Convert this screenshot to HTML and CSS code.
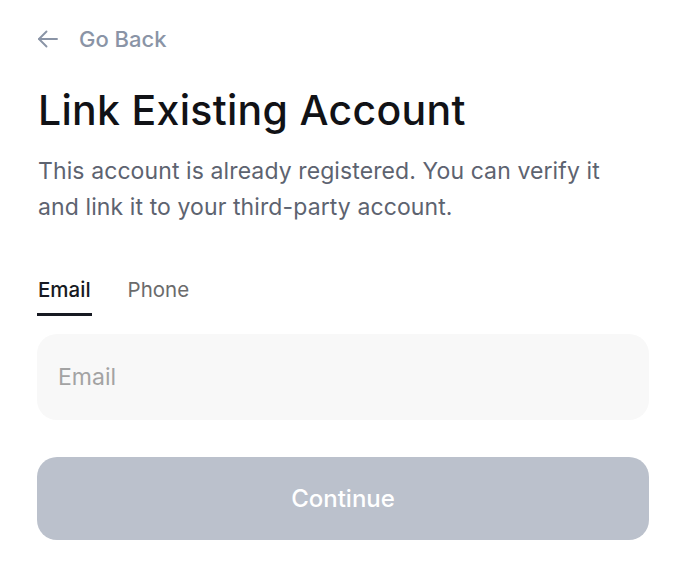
FILE: index.html
```html
<!DOCTYPE html>
<html lang="en">
<head>
<meta charset="utf-8">
<title>Link Existing Account</title>
<link rel="stylesheet" href="styles.css">
</head>
<body>
<main class="page">
  <a class="back" href="#">
    <svg class="back-icon" width="22" height="22" viewBox="0 0 22 22" fill="none" stroke="currentColor" stroke-width="1.9" stroke-linecap="round" stroke-linejoin="round"><path d="M20 11H2"/><path d="M9.5 3.5L2 11l7.5 7.5"/></svg>
    <span>Go Back</span>
  </a>
  <h1 class="title">Link Existing Account</h1>
  <p class="desc">This account is already registered. You can verify it and link it to your third-party account.</p>
  <div class="tabs">
    <button class="tab active">Email</button>
    <button class="tab">Phone</button>
  </div>
  <input class="field" type="email" placeholder="Email">
  <button class="submit" disabled>Continue</button>
</main>
</body>
</html>
```
FILE: styles.css
```css
* { box-sizing: border-box; }
html, body { margin: 0; background: #fff; }
body { font-family: Inter, "Noto Sans", sans-serif; }
.page {
  width: 684px;
  padding: 24px 35px 0 37px;
  display: flex;
  flex-direction: column;
}
.back {
  display: flex;
  align-items: center;
  gap: 20px;
  height: 30px;
  padding-left: 0;
  color: #8a94a6;
  text-decoration: none;
  font-size: 22px;
  font-weight: 500;
}
.back-icon { display: block; }
.title {
  margin: 32px 0 0 1px;
  font-size: 41px;
  line-height: 48px;
  font-weight: 500;
  color: #111216;
  letter-spacing: 0.3px;
}
.desc {
  margin: 19px 0 0 1px;
  font-size: 23px;
  line-height: 36px;
  letter-spacing: 0.1px;
  color: #5d6370;
  max-width: 580px;
}
.tabs {
  display: flex;
  gap: 35px;
  margin-top: 51px;
}
.tab {
  border: 0;
  background: none;
  padding: 0 1px 9px;
  font-family: inherit;
  font-size: 20.5px;
  line-height: 28px;
  color: #6b6b6b;
  border-bottom: 3px solid transparent;
}
.tab.active {
  color: #171a22;
  font-weight: 500;
  border-bottom-color: #171a22;
}
.field {
  margin-top: 18px;
  height: 86px;
  width: 612px;
  border: 0;
  outline: none;
  border-radius: 20px;
  background: #f8f8f8;
  padding: 0 21px;
  font-family: inherit;
  font-size: 23px;
  color: #222;
}
.field::placeholder { color: #a3a3a3; }
.submit {
  margin-top: 37px;
  height: 83px;
  width: 612px;
  border: 0;
  border-radius: 20px;
  background: #bbc1cc;
  color: #fff;
  font-family: inherit;
  font-size: 24px;
  font-weight: 500;
}
```
